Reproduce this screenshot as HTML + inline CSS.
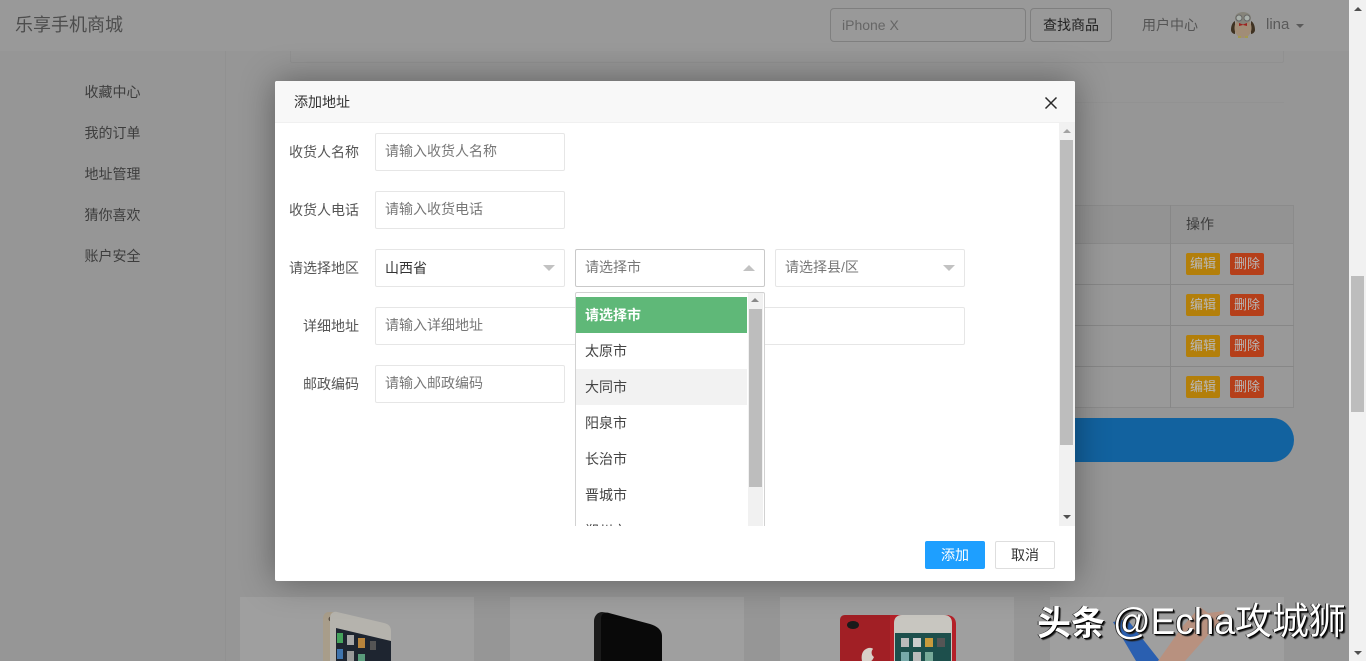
<!DOCTYPE html>
<html lang="zh"><head><meta charset="utf-8"><title>乐享手机商城</title>
<style>
html,body{margin:0;padding:0;width:1366px;height:661px;overflow:hidden;background:#969696}
*{box-sizing:border-box}
body{font:14px "Liberation Sans","Noto Sans CJK SC",sans-serif;color:#333;position:relative}
.a{position:absolute;white-space:nowrap}
.t{line-height:20px}
.nav{left:84.500px;color:#3d3d3d;font-size:14px;line-height:20px}
.modal{left:275px;top:81px;width:800px;height:500px;background:#fff;border-radius:2px;box-shadow:0 0 34px rgba(0,0,0,.38)}
.in{height:38px;background:#fff;border:1px solid #e6e6e6;border-radius:2px;color:#777;line-height:35px;padding-left:9px;font-size:14px}
.lb{right:716px;width:84px;text-align:right;color:#555;line-height:20px;font-size:14px}
.btn{width:34px;height:22px;border-radius:2px;color:#b8b8b8;font-size:13px;line-height:22px;text-align:center}
.y{background:#b37f0a}.r{background:#b53f1a}
.opt{position:absolute;left:0;width:171px;height:36px;line-height:36px;padding-left:9px;color:#444}
.card{top:597px;width:234px;height:64px;background:#9f9f9f}
</style></head><body>
<div class="a" style="left:0;top:0;width:1349px;height:51px;background:#999"></div>
<div class="a" style="left:15px;top:13px;font-size:18px;line-height:25px;color:#4d4d4d">乐享手机商城</div>
<div class="a" style="left:830px;top:8px;width:196px;height:34px;border:1px solid #7f7f7f;border-radius:4px;line-height:32px;padding-left:11px;color:#666">iPhone X</div>
<div class="a" style="left:1030px;top:8px;width:82px;height:34px;border:1px solid #7f7f7f;border-radius:4px;line-height:32px;text-align:center;color:#222">查找商品</div>
<div class="a t" style="left:1142px;top:15px;color:#555">用户中心</div>
<svg class="a" style="left:1228px;top:10px" width="30" height="30" viewBox="0 0 30 30"><path d="M3 20c0-5 2-8 4-9v13c-2 0-4-2-4-4zM27 20c0-5-2-8-4-9v13c2 0 4-2 4-4z" fill="#3f3222"/><ellipse cx="15" cy="18" rx="8.500" ry="10" fill="#a18d77"/><ellipse cx="15" cy="8" rx="8" ry="6" fill="#86847a"/><circle cx="11" cy="8" r="3" fill="#a9b0aa" stroke="#666"/><circle cx="19" cy="8" r="3" fill="#a9b0aa" stroke="#666"/><path d="M11 13l4 1.500 4-1.500v3l-4-1-4 1z" fill="#9c2320"/><rect x="10" y="26" width="3" height="2" fill="#a49a50"/><rect x="17" y="26" width="3" height="2" fill="#a49a50"/></svg>
<div class="a t" style="left:1266px;top:15px;color:#5a5a5a;font-size:15px">lina</div>
<div class="a" style="left:1296px;top:24px;border-left:4px solid transparent;border-right:4px solid transparent;border-top:4px solid #5a5a5a"></div>

<div class="a" style="left:290px;top:51px;width:994px;height:12px;border:1px solid #909090;border-top:0;border-radius:0 0 2px 2px"></div>
<div class="a" style="left:225px;top:51px;width:1px;height:610px;background:#919191"></div>
<div class="a" style="left:1075px;top:102px;width:209px;height:1px;background:#929292"></div>

<div class="a nav" style="top:82px">收藏中心</div>
<div class="a nav" style="top:123px">我的订单</div>
<div class="a nav" style="top:164px">地址管理</div>
<div class="a nav" style="top:205px">猜你喜欢</div>
<div class="a nav" style="top:246px">账户安全</div>

<div class="a" style="left:1075px;top:244px;width:218px;height:164px;background:#999"></div>
<div class="a" style="left:1075px;top:205px;width:219px;height:39px;background:#939393"></div>
<div class="a" style="left:1075px;top:205px;width:219px;height:203px;border:1px solid #8b8b8b;border-left:0"></div>
<div class="a" style="left:1075px;top:284px;width:219px;height:1px;background:#878787"></div>
<div class="a" style="left:1075px;top:325px;width:219px;height:1px;background:#878787"></div>
<div class="a" style="left:1075px;top:366px;width:219px;height:1px;background:#878787"></div>
<div class="a" style="left:1075px;top:243px;width:219px;height:1px;background:#8b8b8b"></div>
<div class="a" style="left:1170px;top:205px;width:1px;height:203px;background:#878787"></div>
<div class="a t" style="left:1186px;top:214px;color:#3d3d3d">操作</div>
<div class="a btn y" style="left:1186px;top:253px">编辑</div><div class="a btn r" style="left:1230px;top:253px">删除</div>
<div class="a btn y" style="left:1186px;top:294px">编辑</div><div class="a btn r" style="left:1230px;top:294px">删除</div>
<div class="a btn y" style="left:1186px;top:335px">编辑</div><div class="a btn r" style="left:1230px;top:335px">删除</div>
<div class="a btn y" style="left:1186px;top:376px">编辑</div><div class="a btn r" style="left:1230px;top:376px">删除</div>
<div class="a" style="left:1000px;top:418px;width:294px;height:44px;border-radius:22px;background:#12629f"></div>

<div class="a card" style="left:240px"></div>
<div class="a card" style="left:510px"></div>
<div class="a card" style="left:780px"></div>
<div class="a card" style="left:1050px"></div>
<svg class="a" style="left:240px;top:597px" width="1060" height="64" viewBox="0 0 1060 64">
<path d="M83 64V22c0-4 2-7 6-7h9v49z" fill="#a89d8a"/>
<circle cx="91" cy="22" r="2.500" fill="#5c5348"/>
<path d="M90 64V21c0-4 3-7 7-6l47 11c5 1 7 4 7 8v30z" fill="#b5b3ad"/>
<path d="M96 31l55 13v20H96z" fill="#1e2530"/>
<rect x="97" y="36" width="6" height="10" fill="#45a35c"/><rect x="107" y="38" width="7" height="10" fill="#a8a8a8"/><rect x="118" y="41" width="7" height="10" fill="#b8843c"/><rect x="130" y="44" width="6" height="9" fill="#555"/><rect x="97" y="52" width="6" height="10" fill="#3f74ad"/><rect x="107" y="54" width="7" height="10" fill="#999"/><rect x="118" y="57" width="7" height="7" fill="#5a9c7c"/>
<path d="M354 64V24c0-4 3-9 8-9l7 1c-3 1-4 3-4 7v41z" fill="#1b1b1b"/>
<path d="M361 64V22c0-5 3-7 8-6l41 11c7 2 12 6 12 12v25z" fill="#090909"/>
<path d="M600 64V23c0-3 2-5 5-5h50v46z" fill="#a11f25"/>
<path d="M650 18h56c6 0 10 3 10 9v37h-66z" fill="#b42028"/>
<path d="M654 64V26c0-5 3-8 8-8h42c5 0 8 3 8 8v38z" fill="#c8c6c0"/>
<rect x="655" y="36" width="56" height="28" fill="#1d4f4c"/>
<rect x="661" y="41" width="8" height="9" fill="#bbb"/><rect x="673" y="41" width="8" height="9" fill="#ccc"/><rect x="685" y="41" width="8" height="9" fill="#c89a3c"/><rect x="697" y="41" width="8" height="9" fill="#555"/><rect x="661" y="55" width="8" height="9" fill="#7aa"/><rect x="673" y="55" width="8" height="9" fill="#bbb"/><rect x="685" y="55" width="8" height="9" fill="#7a9"/>
<ellipse cx="613" cy="28" rx="6" ry="4" fill="#1a1a1a"/>
<path d="M626 52c3-2 7-1 7 0-2 2-2 6 1 8-1 2-2 4-3 4h-9c-1-5 0-10 4-12z" fill="#d8d0c8"/>
<path d="M873 25l14-3 33 42h-24z" fill="#2a5fb0"/>
<path d="M918 64l24-34 18-20 8 6 17-2-8 14-32 36z" fill="#b8917f"/>
</svg>

<div class="a" style="left:1349px;top:0;width:17px;height:661px;background:#f1f1f1"></div>
<div class="a" style="left:1351px;top:276px;width:13px;height:136px;background:#bdbdbd"></div>
<div class="a" style="left:1354px;top:7px;border-left:4px solid transparent;border-right:4px solid transparent;border-bottom:4px solid #505050"></div>
<div class="a" style="left:1354px;top:651px;border-left:4px solid transparent;border-right:4px solid transparent;border-top:4px solid #505050"></div>

<div class="a modal">
  <div class="a" style="left:0;top:0;width:800px;height:42px;background:#f8f8f8;border-radius:2px 2px 0 0;border-bottom:1px solid #f0f0f0"></div>
  <div class="a t" style="left:19px;top:11px;color:#333">添加地址</div>
  <svg class="a" style="left:769px;top:15px" width="14" height="14" viewBox="0 0 14 14"><path d="M1.500 1.500l11 11M12.500 1.500l-11 11" stroke="#2a2a2a" stroke-width="1.500" fill="none"/></svg>

  <div class="a" style="left:784px;top:42px;width:16px;height:403px;background:#f1f1f1"></div>
  <div class="a" style="left:785px;top:59px;width:13px;height:305px;background:#bdbdbd"></div>
  <div class="a" style="left:788px;top:48px;border-left:4px solid transparent;border-right:4px solid transparent;border-bottom:4px solid #a3a3a3"></div>
  <div class="a" style="left:788px;top:434px;border-left:4px solid transparent;border-right:4px solid transparent;border-top:4px solid #505050"></div>

  <div class="a lb" style="top:61px">收货人名称</div>
  <div class="a in" style="left:100px;top:52px;width:190px">请输入收货人名称</div>
  <div class="a lb" style="top:119px">收货人电话</div>
  <div class="a in" style="left:100px;top:110px;width:190px">请输入收货电话</div>
  <div class="a lb" style="top:177px">请选择地区</div>
  <div class="a in" style="left:100px;top:168px;width:190px;color:#333;line-height:36px">山西省</div>
  <div class="a" style="left:268px;top:184px;border-left:6px solid transparent;border-right:6px solid transparent;border-top:6px solid #c2c2c2"></div>
  <div class="a in" style="left:300px;top:168px;width:190px;border-color:#c9c9c9">请选择市</div>
  <div class="a" style="left:468px;top:184px;border-left:6px solid transparent;border-right:6px solid transparent;border-bottom:6px solid #c2c2c2"></div>
  <div class="a in" style="left:500px;top:168px;width:190px">请选择县/区</div>
  <div class="a" style="left:668px;top:184px;border-left:6px solid transparent;border-right:6px solid transparent;border-top:6px solid #c2c2c2"></div>
  <div class="a lb" style="top:235px">详细地址</div>
  <div class="a in" style="left:100px;top:226px;width:590px">请输入详细地址</div>
  <div class="a lb" style="top:293px">邮政编码</div>
  <div class="a in" style="left:100px;top:284px;width:190px">请输入邮政编码</div>

  <div class="a" style="left:300px;top:211px;width:190px;height:234px;overflow:hidden;background:#fff;border:1px solid #d2d2d2;border-bottom:0;border-radius:2px 2px 0 0">
    <div class="opt" style="top:4px;background:#5fb878;color:#fff;font-weight:700">请选择市</div>
    <div class="opt" style="top:40px">太原市</div>
    <div class="opt" style="top:76px;background:#f2f2f2">大同市</div>
    <div class="opt" style="top:112px">阳泉市</div>
    <div class="opt" style="top:148px">长治市</div>
    <div class="opt" style="top:184px">晋城市</div>
    <div class="opt" style="top:220px">朔州市</div>
    <div class="a" style="left:172px;top:0;width:15px;height:234px;background:#f1f1f1"></div>
    <div class="a" style="left:173px;top:16px;width:13px;height:178px;background:#bdbdbd"></div>
    <div class="a" style="left:175px;top:5px;border-left:4px solid transparent;border-right:4px solid transparent;border-bottom:4px solid #8a8a8a"></div>
  </div>

  <div class="a" style="left:650px;top:460px;width:60px;height:28px;background:#1e9fff;border-radius:2px;color:#fff;line-height:28px;text-align:center">添加</div>
  <div class="a" style="left:720px;top:460px;width:60px;height:28px;background:#fff;border:1px solid #dedede;border-radius:2px;color:#333;line-height:26px;text-align:center">取消</div>
</div>

<div class="a" style="left:1037px;top:601px;font-size:34px;line-height:46px;color:#fff;font-weight:700;text-shadow:1px 1px 0 #000,2px 2px 1px #222,-1px 0 0 #333">头条</div>
<div class="a" style="left:1113px;top:599px;font-size:37px;line-height:46px;color:#fff;text-shadow:1px 1px 0 #000,2px 2px 1px #222,-1px 0 0 #333">@Echa攻城狮</div>
</body></html>
